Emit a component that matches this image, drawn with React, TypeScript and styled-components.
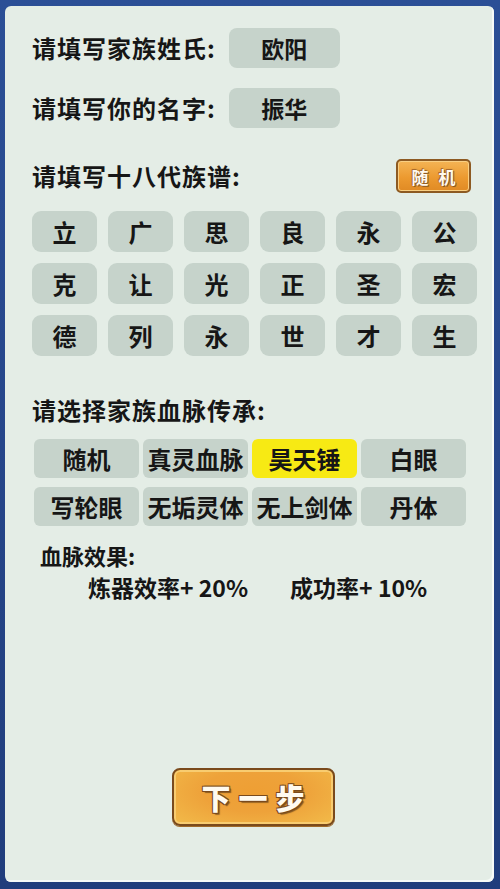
import React, { useState } from "react";
import styled, { createGlobalStyle } from "styled-components";

const surname = "欧阳";
const givenName = "振华";
const generations = [
  "立", "广", "思", "良", "永", "公",
  "克", "让", "光", "正", "圣", "宏",
  "德", "列", "永", "世", "才", "生",
];
const bloodlines = ["随机", "真灵血脉", "昊天锤", "白眼", "写轮眼", "无垢灵体", "无上剑体", "丹体"];

const App: React.FC = () => {
  const [picked, setPicked] = useState(2);
  return (
    <>
      <GlobalStyle />
      <Frame>
        <Panel>
          <NameRow>
            <Label>请填写家族姓氏:</Label>
            <NameBox>{surname}</NameBox>
          </NameRow>
          <NameRow $top={20}>
            <Label>请填写你的名字:</Label>
            <NameBox>{givenName}</NameBox>
          </NameRow>

          <SectionHeader>
            <Label>请填写十八代族谱:</Label>
            <RandomButton>随 机</RandomButton>
          </SectionHeader>
          <GenGrid>
            {generations.map((c, i) => (
              <GenCell key={i}>{c}</GenCell>
            ))}
          </GenGrid>

          <SectionTitle>请选择家族血脉传承:</SectionTitle>
          <BloodGrid>
            {bloodlines.map((b, i) => (
              <BloodButton key={b} $active={i === picked} onClick={() => setPicked(i)}>
                {b}
              </BloodButton>
            ))}
          </BloodGrid>

          <EffectTitle>血脉效果:</EffectTitle>
          <EffectRow>
            <Effect>炼器效率+ 20%</Effect>
            <Effect>成功率+ 10%</Effect>
          </EffectRow>

          <Footer>
            <NextButton>下一步</NextButton>
          </Footer>
        </Panel>
      </Frame>
    </>
  );
};

export default App;

const GlobalStyle = createGlobalStyle`
  html, body {
    margin: 0;
    padding: 0;
    background: #26468a;
  }
  * {
    box-sizing: border-box;
  }
`;

const Frame = styled.div`
  height: 889px;
  width: 500px;
  padding: 6px 6px 7px 5px;
  background: linear-gradient(180deg, #2b4f96 0%, #26468a 50%, #203d7c 100%);
  font-family: "Noto Sans CJK SC", "Noto Sans", sans-serif;
  color: #161616;
`;

const Panel = styled.div`
  height: 100%;
  background: #e4ede6;
  border-radius: 6px;
  box-shadow: inset -2px -2px 0 #f6faf7;
  padding: 22px 17px 0 27px;
  display: flex;
  flex-direction: column;
`;

const NameRow = styled.div<{ $top?: number }>`
  display: flex;
  align-items: center;
  gap: 13px;
  height: 40px;
  margin-top: ${(p) => p.$top ?? 0}px;
`;

const Label = styled.div`
  font-size: 24px;
  font-weight: 700;
  letter-spacing: 1px;
  line-height: 1;
`;

const NameBox = styled.div`
  width: 111px;
  height: 40px;
  border-radius: 8px;
  background: #c6d3cb;
  display: flex;
  align-items: center;
  justify-content: center;
  font-size: 23px;
  font-weight: 700;
`;

const SectionHeader = styled.div`
  display: flex;
  align-items: center;
  justify-content: space-between;
  height: 34px;
  margin-top: 31px;
  padding-right: 6px;
`;

const RandomButton = styled.button`
  width: 75px;
  height: 34px;
  border: 2px solid #8d5a22;
  border-radius: 5px;
  background: linear-gradient(180deg, #f4b455 0%, #ec9a30 55%, #e08a24 100%);
  box-shadow: inset 0 0 0 1px #f9cf83;
  color: #fff8ee;
  font-family: "Noto Sans CJK SC", sans-serif;
  font-size: 17px;
  font-weight: 700;
  letter-spacing: 3px;
  padding: 0 0 0 3px;
  text-shadow: 0 0 2px #8d5a22, 1px 1px 0 #8d5a22, -1px -1px 0 #b07030;
`;

const GenGrid = styled.div`
  display: grid;
  grid-template-columns: repeat(6, 65px);
  grid-auto-rows: 41px;
  column-gap: 11px;
  row-gap: 11px;
  margin-top: 18px;
`;

const GenCell = styled.div`
  border-radius: 9px;
  background: #c6d3cb;
  display: flex;
  align-items: center;
  justify-content: center;
  font-size: 24px;
  font-weight: 700;
`;

const SectionTitle = styled(Label)`
  margin-top: 42px;
`;

const BloodGrid = styled.div`
  display: grid;
  grid-template-columns: repeat(4, 105px);
  grid-auto-rows: 39px;
  column-gap: 4px;
  row-gap: 9px;
  margin: 17px 0 0 2px;
`;

const BloodButton = styled.button<{ $active: boolean }>`
  border: none;
  border-radius: 6px;
  background: ${(p) => (p.$active ? "#f7ea14" : "#c6d3cb")};
  color: #161616;
  font-family: "Noto Sans CJK SC", sans-serif;
  font-size: 24px;
  font-weight: 700;
  padding: 0;
  display: flex;
  align-items: center;
  justify-content: center;
`;

const EffectTitle = styled.div`
  font-size: 22px;
  font-weight: 700;
  margin: 17px 0 0 8px;
  line-height: 1.1;
`;

const EffectRow = styled.div`
  display: flex;
  gap: 42px;
  margin: 8px 0 0 56px;
`;

const Effect = styled.div`
  font-size: 23px;
  font-weight: 700;
  line-height: 1.1;
  white-space: pre;
`;

const Footer = styled.div`
  margin-top: auto;
  padding-bottom: 56px;
  display: flex;
  justify-content: center;
`;

const NextButton = styled.button`
  width: 163px;
  height: 58px;
  margin-left: -3px;
  border: 2px solid #7a4a1c;
  border-radius: 8px;
  background: radial-gradient(ellipse at 50% 40%, #ee9f34 0%, #eea23a 45%, #f2bb4a 100%);
  box-shadow: inset 0 0 0 2px #f8cc70, 0 1px 0 #a06a2a;
  color: #fffaf0;
  font-family: "Noto Sans CJK SC", sans-serif;
  font-size: 29px;
  font-weight: 900;
  letter-spacing: 8px;
  padding: 0 0 0 8px;
  text-shadow: 1px 1px 0 #7a4a1c, -1px 1px 0 #7a4a1c, 1px -1px 0 #7a4a1c, -1px -1px 0 #7a4a1c, 2px 2px 1px #8a5a20;
`;
